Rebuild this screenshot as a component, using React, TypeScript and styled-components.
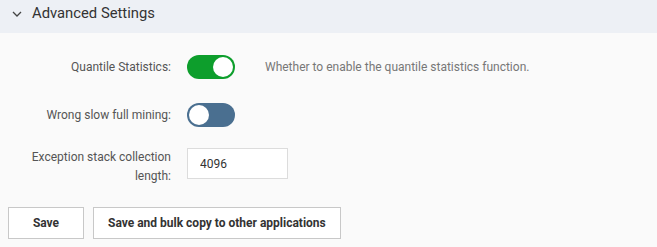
import styled, { createGlobalStyle } from "styled-components"

const GlobalStyle = createGlobalStyle`
	html, body {
		margin: 0;
		padding: 0;
		background: #fafafa;
		font-family: Roboto, "Liberation Sans", Arial, sans-serif;
	}
`

const Panel = styled.div`
	width: 657px;
	height: 247px;
	background: #fafafa;
	overflow: hidden;
`

const Header = styled.div`
	box-sizing: border-box;
	display: flex;
	align-items: center;
	gap: 10px;
	height: 33px;
	padding: 4px 11px 10px 12px;
	background: #edf0f5;
	color: #333;
	font-size: 14.8px;
	line-height: 19px;
`

const Form = styled.div`
	display: flex;
	flex-direction: column;
	padding: 22px 8px 0;
`

const Row = styled.div<{ $top?: number; $align?: string }>`
	display: flex;
	align-items: ${(p) => p.$align || "center"};
	gap: 16px;
	margin-top: ${(p) => p.$top || 0}px;
`

const Label = styled.label`
	width: 163px;
	flex-shrink: 0;
	text-align: right;
	color: #555;
	font-size: 12px;
	line-height: 19px;
`

const Switch = styled.span<{ $on?: boolean }>`
	position: relative;
	display: inline-block;
	width: 48px;
	height: 24px;
	border-radius: 12px;
	background: ${(p) => (p.$on ? "#0d9e2c" : "#4a6f90")};

	&::after {
		content: "";
		position: absolute;
		top: 2px;
		left: ${(p) => (p.$on ? "26px" : "2px")};
		width: 20px;
		height: 20px;
		border-radius: 50%;
		background: #fff;
	}
`

const Hint = styled.span`
	margin-left: 14px;
	color: #777;
	font-size: 12px;
`

const Input = styled.input`
	box-sizing: border-box;
	width: 101px;
	height: 31px;
	padding: 0 12px;
	border: 1px solid #dcdcdc;
	background: #fff;
	color: #333;
	font-family: inherit;
	font-size: 12px;
	outline: none;
`

const Actions = styled.div`
	display: flex;
	gap: 9px;
	margin-top: 21px;
`

const Button = styled.button`
	box-sizing: border-box;
	height: 32px;
	min-width: 76px;
	padding: 0 14px;
	border: 1px solid #c8c8c8;
	background: #fff;
	color: #333;
	font-family: inherit;
	font-size: 12px;
	font-weight: 700;
	cursor: pointer;
`

const Chevron = () => (
	<svg width="10" height="6" viewBox="0 0 10 6" fill="none">
		<path d="M1 1l4 4 4-4" stroke="#444" strokeWidth="1.3" />
	</svg>
)

const App = () => {
	return (
		<>
			<GlobalStyle />
			<Panel>
				<Header>
					<Chevron />
					Advanced Settings
				</Header>
				<Form>
					<Row>
						<Label>Quantile Statistics:</Label>
						<Switch $on />
						<Hint>Whether to enable the quantile statistics function.</Hint>
					</Row>
					<Row $top={24}>
						<Label>Wrong slow full mining:</Label>
						<Switch />
					</Row>
					<Row $top={21} $align="flex-start">
						<Label>Exception stack collection length:</Label>
						<Input defaultValue="4096" />
					</Row>
					<Actions>
						<Button>Save</Button>
						<Button>Save and bulk copy to other applications</Button>
					</Actions>
				</Form>
			</Panel>
		</>
	)
}

export default App
